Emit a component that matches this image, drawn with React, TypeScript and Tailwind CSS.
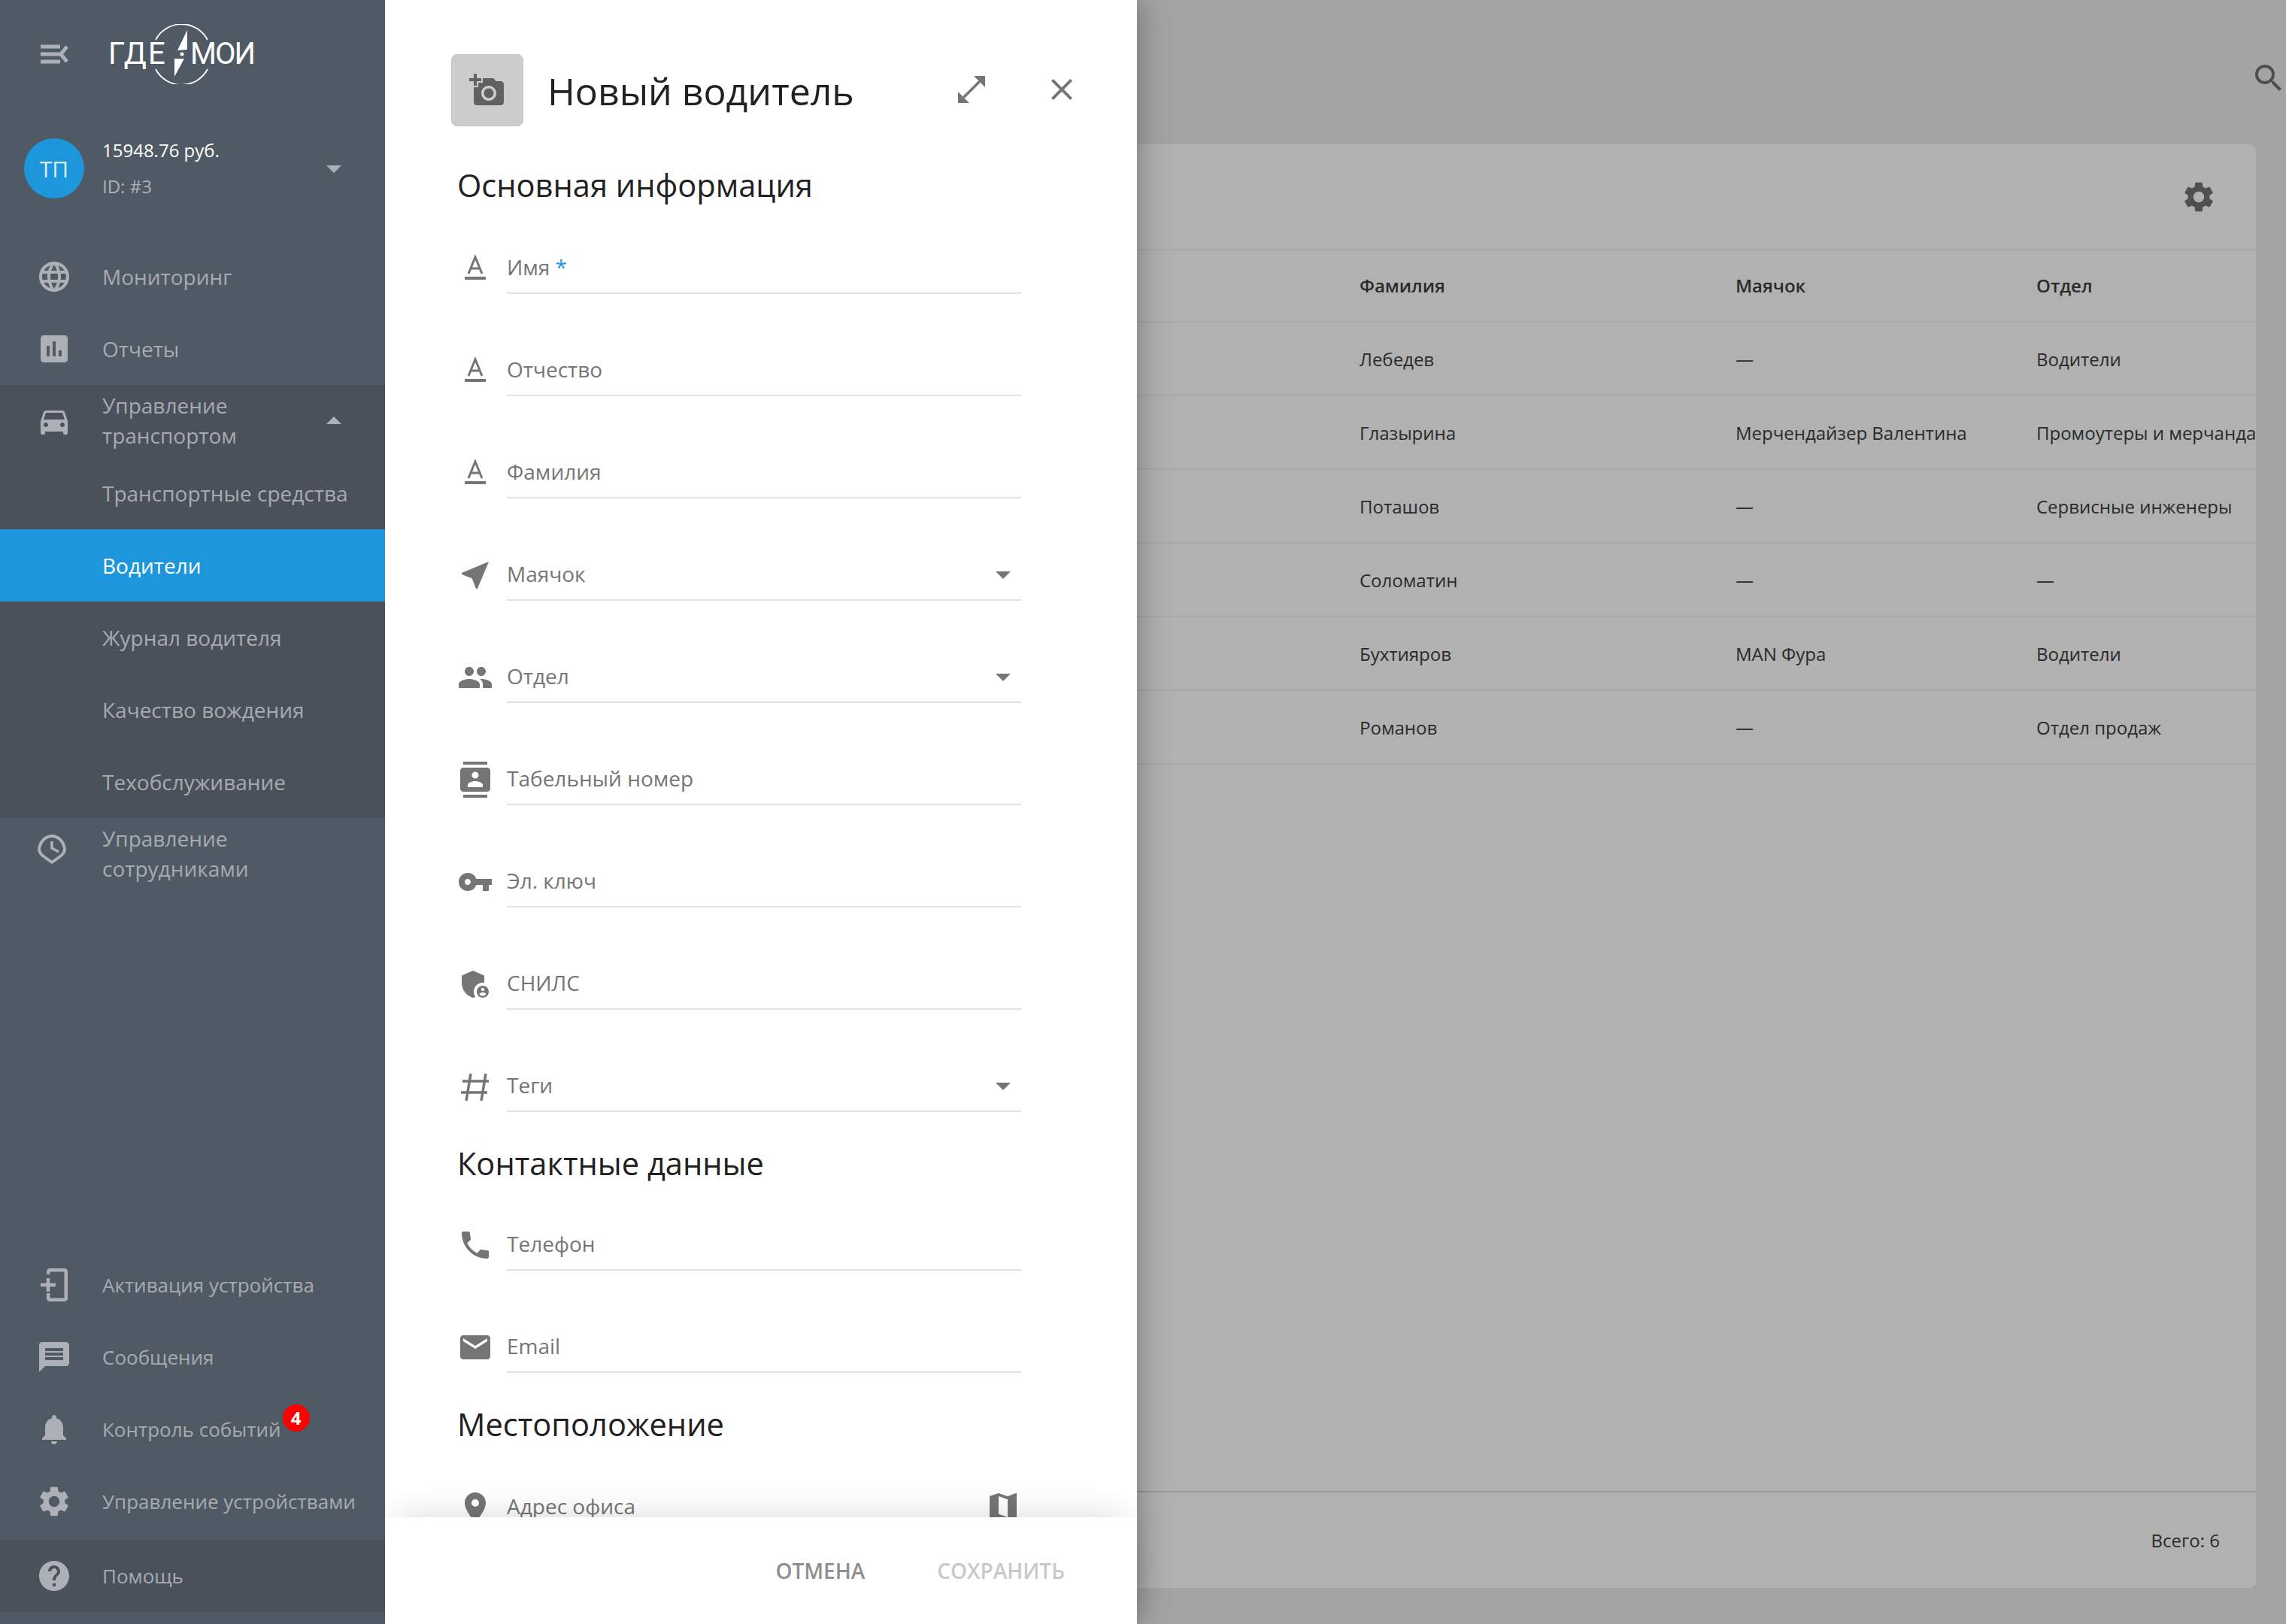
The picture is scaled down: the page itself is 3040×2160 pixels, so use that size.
import React from "react";
import {
  MdAddAPhoto,
  MdAdminPanelSettings,
  MdArrowDropDown,
  MdArrowDropUp,
  MdAssessment,
  MdClose,
  MdContacts,
  MdDirectionsCar,
  MdEmail,
  MdHelp,
  MdLanguage,
  MdMap,
  MdMessage,
  MdNearMe,
  MdNotifications,
  MdPeople,
  MdPhone,
  MdPlace,
  MdSearch,
  MdSettings,
  MdVpnKey,
} from "react-icons/md";

const FONT = "font-['Open_Sans','Noto_Sans',sans-serif]";

// ── Hand drawn icons ──
const MenuFold = () => (
  <svg viewBox="0 0 48 48" className="w-12 h-12 shrink-0" fill="none">
    <path d="M6 14h26M6 24h26M6 34h26" stroke="#adb1b7" strokeWidth="5" />
    <path d="M41 14l-8 10 8 10" stroke="#adb1b7" strokeWidth="5" />
  </svg>
);

const ClockPin = () => (
  <svg viewBox="0 0 48 48" className="w-12 h-12 shrink-0 -mt-[12px]" fill="none">
    <path d="M21 41L8 31.500C4 27 3 24 5 19 7.500 11 14 6 21 6s13.500 5 16 13c2 5 1 8-3 12.500z" stroke="#adb1b7" strokeWidth="4" strokeLinejoin="round" />
    <path d="M21 13v9l9 5" stroke="#adb1b7" strokeWidth="3.500" />
  </svg>
);

const ActivateDevice = () => (
  <svg viewBox="0 0 48 48" className="w-12 h-12 shrink-0" fill="none">
    <path d="M16.250 10V6.250a2 2 0 0 1 2-2H37.750a2 2 0 0 1 2 2v35.500a2 2 0 0 1-2 2H18.250a2 2 0 0 1-2-2V35" stroke="#adb1b7" strokeWidth="4.500" />
    <path d="M6 24h20M16 15v18" stroke="#adb1b7" strokeWidth="4.500" />
  </svg>
);

const TextIcon = () => (
  <svg viewBox="0 0 48 48" className="w-12 h-12 shrink-0" fill="none">
    <path d="M15 31l9-22 9 22M18 24h12" stroke="#757575" strokeWidth="3" />
    <path d="M10 37h28" stroke="#757575" strokeWidth="4" />
  </svg>
);

const HashIcon = () => (
  <svg viewBox="0 0 48 48" className="w-12 h-12 shrink-0" fill="none">
    <path d="M18 7l-6 36M38 7l-6 36M7 17h35M5 32h35" stroke="#757575" strokeWidth="3.500" />
  </svg>
);

const ExpandIcon = () => (
  <svg viewBox="0 0 48 48" className="w-12 h-12" fill="none">
    <path d="M27 6h15v15zM6 27v15h15z" fill="#757575" />
    <path d="M34.500 13.500l-21 21" stroke="#757575" strokeWidth="3.500" />
  </svg>
);

const Logo = () => (
  <div className="relative flex items-center w-[194px] h-[80px] ml-[48px] text-white font-['Roboto',sans-serif] text-[40px] leading-none">
    <span className="tracking-[2px]">ГДЕ</span>
    <span className="ml-auto tracking-[-2px]">МОИ</span>
    <svg viewBox="0 0 80 80" className="absolute left-[57px] top-0 w-[80px] h-[80px]" fill="none">
      <path d="M6 21A39 39 0 0 1 75 21M6 60A39 39 0 0 0 75 60" stroke="#fff" strokeWidth="1.800" />
      <path d="M48 8v26l-13 1zM31 70V46l13 0z" fill="#fff" />
      <circle cx="41" cy="40" r="2.500" fill="#fff" />
    </svg>
  </div>
);

// ── Sidebar ──
type NavItem = { icon?: React.ReactNode; label: React.ReactNode; small?: boolean };

const SideIcon = ({ children }: { children: React.ReactNode }) => (
  <span className="w-12 h-12 shrink-0 flex items-center justify-center text-[48px] text-[#adb1b7]">{children}</span>
);

function NavRow({ icon, label, small }: NavItem) {
  return (
    <div className={`flex items-center h-[96px] pl-[48px] gap-[40px] ${small ? "text-[26px]" : "text-[28px]"} leading-[40px] text-[#a7abb1]`}>
      {icon ?? <span className="w-12 shrink-0" />}
      <span>{label}</span>
    </div>
  );
}

function Sidebar() {
  return (
    <aside className="relative z-20 w-[512px] shrink-0 h-full flex flex-col bg-[#505a64]">
      <div className="flex items-center h-[144px] pl-[48px]">
        <MenuFold />
        <Logo />
      </div>
      <div className="flex items-center h-[160px] mb-[16px] pl-[32px] pr-[44px]">
        <div className="w-[80px] h-[80px] rounded-full bg-[#1e96dc] flex items-center justify-center text-[30px] text-[#d9eefa]">ТП</div>
        <div className="ml-[24px] flex-1 text-[24px] leading-[48px]">
          <div className="text-white font-medium">15948.76 руб.</div>
          <div className="text-[#adb1b7] font-medium">ID: #3</div>
        </div>
        <MdArrowDropDown className="text-[48px] text-[#adb1b7]" />
      </div>

      <NavRow icon={<SideIcon><MdLanguage /></SideIcon>} label="Мониторинг" />
      <NavRow icon={<SideIcon><MdAssessment /></SideIcon>} label="Отчеты" />

      <div className="bg-[#4a515b]">
        <div className="flex items-center h-[96px] pl-[48px] pr-[44px] gap-[40px] text-[28px] leading-[40px] text-[#a7abb1]">
          <SideIcon><MdDirectionsCar /></SideIcon>
          <span className="flex-1 -mt-[2px]">Управление<br />транспортом</span>
          <MdArrowDropUp className="text-[48px] text-[#adb1b7]" />
        </div>
        <NavRow label="Транспортные средства" />
        <div className="flex items-center h-[96px] pl-[136px] text-[28px] font-medium text-white bg-[#1e96dc]">Водители</div>
        <NavRow label="Журнал водителя" />
        <NavRow label="Качество вождения" />
        <NavRow label="Техобслуживание" />
      </div>
      <NavRow icon={<ClockPin />} label={<span className="block -mt-[2px]">Управление<br />сотрудниками</span>} />

      <div className="mt-auto pb-[16px]">
        <div className="pb-[3px]">
          <NavRow small icon={<ActivateDevice />} label="Активация устройства" />
          <NavRow small icon={<SideIcon><MdMessage /></SideIcon>} label="Сообщения" />
          <NavRow
            small
            icon={<SideIcon><MdNotifications /></SideIcon>}
            label={
              <span className="relative">
                Контроль событий
                <span className="absolute -right-[38px] -top-[15px] w-[36px] h-[36px] rounded-full bg-[#ff0000] flex items-center justify-center text-[24px] font-bold text-white">4</span>
              </span>
            }
          />
          <NavRow small icon={<SideIcon><MdSettings /></SideIcon>} label="Управление устройствами" />
        </div>
        <div className="bg-[#4a515b]">
          <NavRow small icon={<SideIcon><MdHelp /></SideIcon>} label="Помощь" />
        </div>
      </div>
    </aside>
  );
}

// ── Background page ──
const ROWS = [
  ["Лебедев", "—", "Водители"],
  ["Глазырина", "Мерчендайзер Валентина", "Промоутеры и мерчандайзеры"],
  ["Поташов", "—", "Сервисные инженеры"],
  ["Соломатин", "—", "—"],
  ["Бухтияров", "MAN Фура", "Водители"],
  ["Романов", "—", "Отдел продаж"],
];

const ROW_GRID = "grid grid-cols-[1256px_500px_400px_1fr] items-center whitespace-nowrap border-b-2 border-[#a8a8a8]";

function DriversPage() {
  return (
    <main className="flex-1 min-w-0 h-full flex flex-col overflow-hidden bg-[#a4a4a4] px-[40px] pb-[48px]">
      <div className="h-[192px] shrink-0 flex justify-end pt-[80px] -mr-[41px]">
        <MdSearch className="text-[48px] text-[#4f4f4f]" />
      </div>
      <div className="flex-1 flex flex-col rounded-lg overflow-hidden bg-[#b1b1b1] text-[24px] text-[#2a2a2a]">
        <div className="h-[141px] shrink-0 flex items-center justify-end pr-[52px] border-b-2 border-[#a8a8a8]">
          <MdSettings className="text-[48px] text-[#4f4f4f]" />
        </div>
        <div className={`${ROW_GRID} h-[96px] shrink-0 font-semibold`}>
          <span />
          <span>Фамилия</span>
          <span>Маячок</span>
          <span>Отдел</span>
        </div>
        <div className="flex-1">
          {ROWS.map(row => (
            <div key={row[0]} className={`${ROW_GRID} h-[98px] pt-[1px]`}>
              <span />
              {row.map((cell, i) => (
                <span key={i}>{cell}</span>
              ))}
            </div>
          ))}
        </div>
        <div className="h-[129px] shrink-0 flex items-center justify-end pr-[48px] border-t-2 border-[#999999]">Всего: 6</div>
      </div>
    </main>
  );
}

// ── Driver form ──
function Field({ icon, label, required, right }: { icon: React.ReactNode; label: string; required?: boolean; right?: React.ReactNode }) {
  return (
    <div className="flex items-center h-[68px] mt-[68px] first:mt-0">
      <span className="w-12 h-12 shrink-0 flex items-center justify-center text-[48px] text-[#757575]">{icon}</span>
      <div className="ml-[18px] flex-1 h-full flex items-center justify-between border-b-2 border-[#e2e2e2] text-[28px] text-[#757575]">
        <span className="-mt-[2px]">
          {label}
          {required && <span className="text-[#1e96dc]"> *</span>}
        </span>
        {right}
      </div>
    </div>
  );
}

const Caret = <MdArrowDropDown className="text-[48px] text-[#757575]" />;

const SectionTitle = ({ children, className }: { children: React.ReactNode; className: string }) => (
  <h2 className={`text-[41.6px] font-medium leading-[56px] text-[#212121] ${className}`}>{children}</h2>
);

function DriverForm() {
  return (
    <section className="absolute z-10 left-[512px] top-0 bottom-0 w-[1000px] flex flex-col bg-white shadow-[0_0_40px_rgba(0,0,0,0.35)]">
      <div className="h-[2018px] shrink-0 overflow-hidden px-[96px] pr-[154px]">
        <div className="flex items-center mt-[72px] h-[96px] -ml-[8px] -mr-[80px]">
          <div className="w-[96px] h-[96px] rounded-lg bg-[#cccccc] border border-[#c4c4c4] flex items-center justify-center text-[48px] text-[#616161]">
            <MdAddAPhoto />
          </div>
          <h1 className="ml-[32px] flex-1 text-[50px] font-medium leading-[64px] text-[#212121] mt-[2px]">Новый водитель</h1>
          <div className="-mt-[2px]"><ExpandIcon /></div>
          <MdClose className="ml-[72px] mr-[2px] -mt-[2px] text-[48px] text-[#757575]" />
        </div>

        <SectionTitle className="mt-[50px] mb-[49px]">Основная информация</SectionTitle>
        <div>
          <Field icon={<TextIcon />} label="Имя" required />
          <Field icon={<TextIcon />} label="Отчество" />
          <Field icon={<TextIcon />} label="Фамилия" />
          <Field icon={<MdNearMe />} label="Маячок" right={Caret} />
          <Field icon={<MdPeople />} label="Отдел" right={Caret} />
          <Field icon={<MdContacts />} label="Табельный номер" />
          <Field icon={<MdVpnKey />} label="Эл. ключ" />
          <Field icon={<MdAdminPanelSettings />} label="СНИЛС" />
          <Field icon={<HashIcon />} label="Теги" right={Caret} />
        </div>

        <SectionTitle className="mt-[40px] mb-[47px]">Контактные данные</SectionTitle>
        <div>
          <Field icon={<MdPhone />} label="Телефон" />
          <Field icon={<MdEmail />} label="Email" />
        </div>

        <SectionTitle className="mt-[40px] mb-[49px]">Местоположение</SectionTitle>
        <div>
          <Field icon={<MdPlace />} label="Адрес офиса" right={<MdMap className="text-[48px] text-[#757575]" />} />
        </div>
      </div>

      <div className="relative flex-1 flex items-center justify-end gap-[96px] pr-[96px] bg-white text-[28px] font-semibold uppercase shadow-[0_-12px_50px_-20px_rgba(0,0,0,0.22)]">
        <span className="text-[#8f8f8f]">Отмена</span>
        <span className="text-[#c9c9c9]">Сохранить</span>
      </div>
    </section>
  );
}

export default function App() {
  return (
    <div className={`relative flex w-[3040px] h-[2160px] overflow-hidden ${FONT}`}>
      <Sidebar />
      <DriversPage />
      <DriverForm />
    </div>
  );
}
